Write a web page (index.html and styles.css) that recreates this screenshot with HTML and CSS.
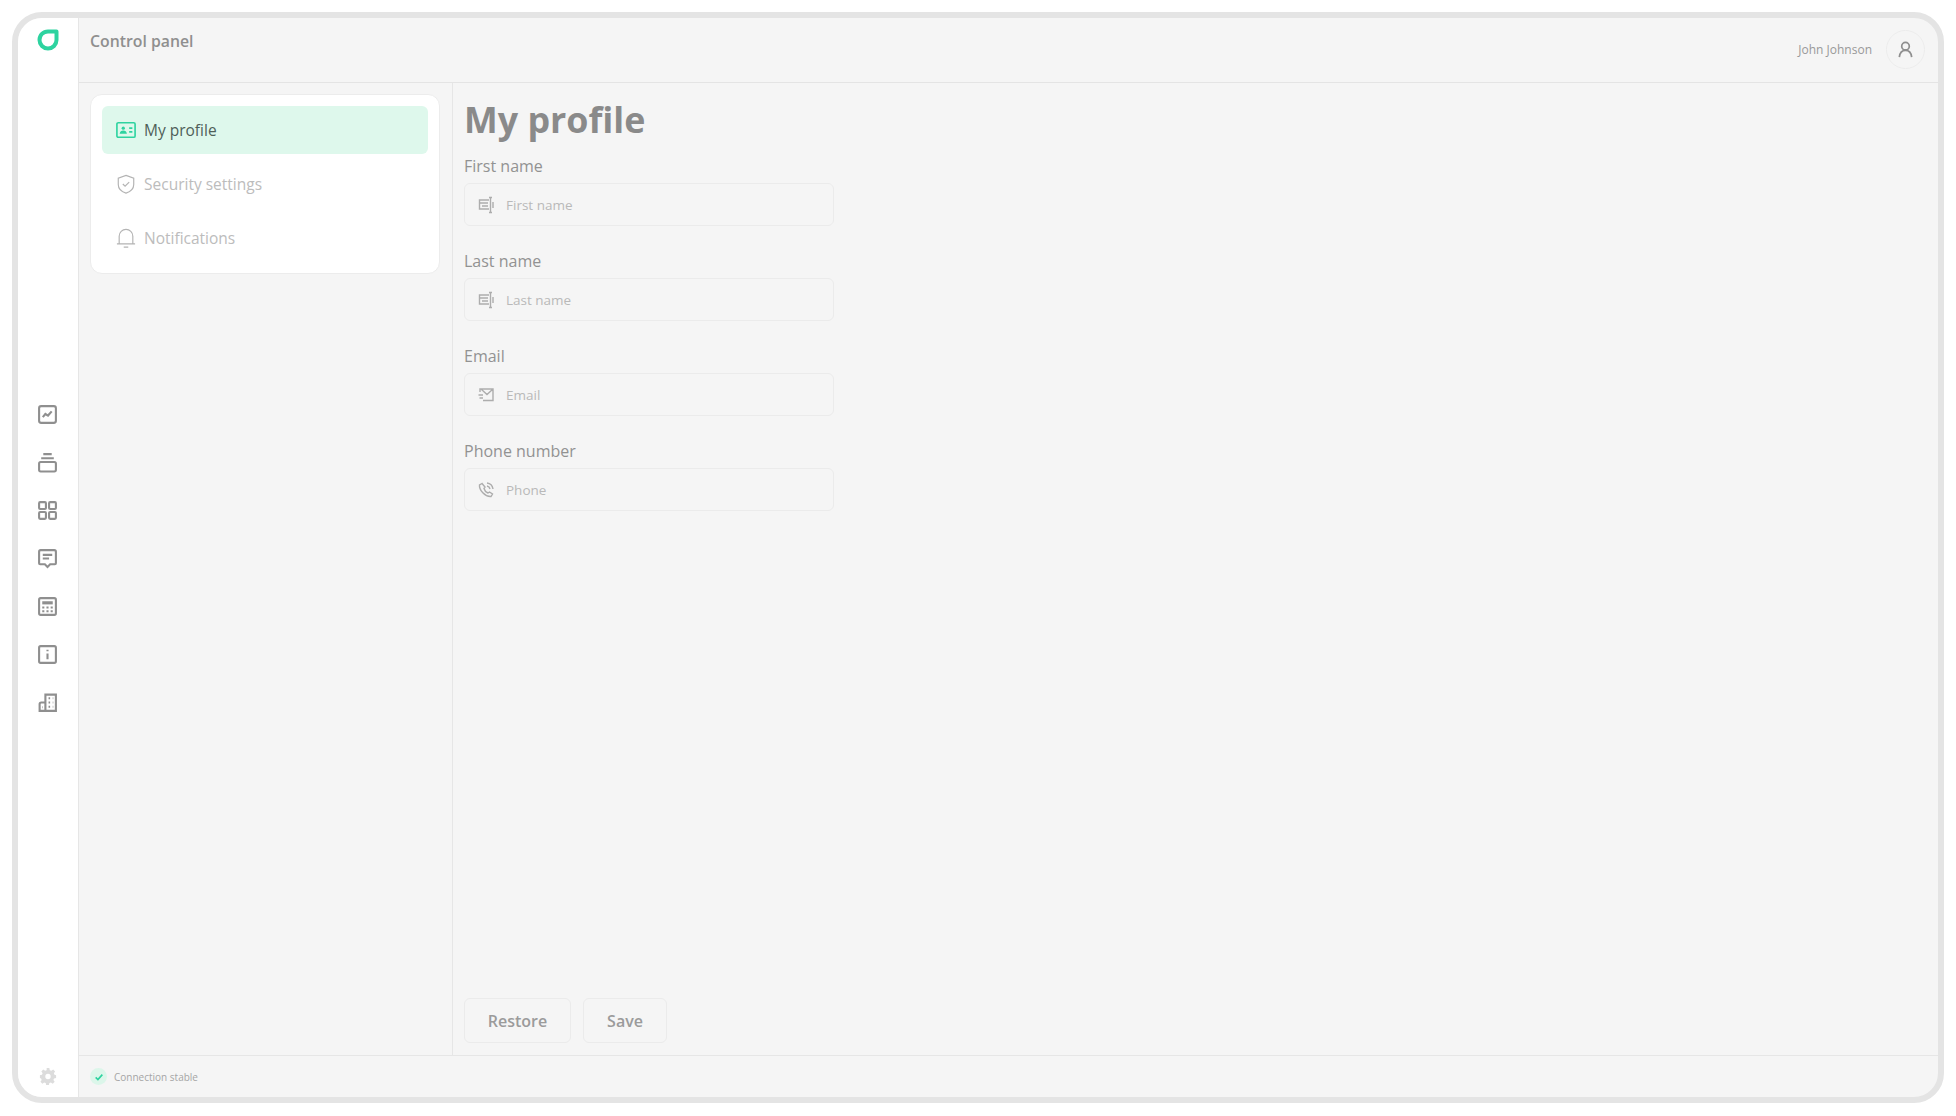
FILE: index.html
```html
<!DOCTYPE html>
<html>
  <head>
    <title>Control panel</title>
    <link rel="stylesheet" href="styles.css">
  </head>
  <body>
    <div class="frame">
      <aside class="rail">
        <svg class="logo" viewBox="0 0 22 22"><path d="M19.500 2.500v8.500a8.500 8.500 0 1 1-17 0c0-4.800 3.700-8.500 8.500-8.500z" fill="none" stroke="#2ed3a0" stroke-width="4" stroke-linejoin="round"/></svg>
        <nav class="rail-nav">
          <svg class="rail-icon" viewBox="0 0 20 20"><rect x="2" y="2" width="16" height="16" rx="2"/><path d="M5.500 12.500l2.500-3 2.500 1.500 3.500-4"/></svg>
          <svg class="rail-icon" viewBox="0 0 20 20"><path d="M6 2h8M4 6h12"/><rect x="2" y="9.500" width="16" height="9" rx="1.500"/></svg>
          <svg class="rail-icon" viewBox="0 0 20 20"><rect x="2" y="2" width="6.500" height="6.500" rx="1"/><rect x="11.500" y="2" width="6.500" height="6.500" rx="1"/><rect x="2" y="11.500" width="6.500" height="6.500" rx="1"/><rect x="11.500" y="11.500" width="6.500" height="6.500" rx="1"/></svg>
          <svg class="rail-icon" viewBox="0 0 20 20"><path d="M3.500 2h13A1.500 1.500 0 0 1 18 3.500v11a1 1 0 0 1-1 1h-4.500L10 18l-2.500-2.500H3a1 1 0 0 1-1-1v-11A1.500 1.500 0 0 1 3.500 2z"/><path d="M5.500 6.500h9M5.500 10h6"/></svg>
          <svg class="rail-icon" viewBox="0 0 20 20"><rect x="2" y="2" width="16" height="16" rx="1.500"/><path class="thick" d="M5 6.500h10"/><path d="M5 11h2M9 11h2M13 11h2M5 14.500h2M9 14.500h2M13 14.500h2"/></svg>
          <svg class="rail-icon" viewBox="0 0 20 20"><rect x="2" y="2" width="16" height="16" rx="1.500"/><path d="M10 9v5.500M10 5.500v1.500"/></svg>
          <svg class="rail-icon" viewBox="0 0 20 20"><path d="M8 10V2.500h10V18H2.500v-6.500A1.500 1.500 0 0 1 4 10zM8 10v8"/><path d="M11 6h1.500M15 6h.5M11 10h1.500M15 10h.5M11 14h1.500M15 14h.5M5 14.500h.5"/></svg>
        </nav>
        <svg class="gear" viewBox="0 0 20 20"><path d="M8.500 1h3l.5 2.500 1.700.7 2.100-1.400 2.100 2.100-1.400 2.100.7 1.700L19 9.200v3l-2.300.5-.7 1.700 1.400 2.100-2.100 2.100-2.100-1.400-1.700.7-.5 2.500h-3l-.5-2.500-1.700-.7-2.100 1.400-2.100-2.100 1.400-2.100-.7-1.700L1 12.200v-3l2.300-.5.700-1.700-1.400-2.100 2.100-2.100 2.100 1.400 1.700-.7zM10 7.500a3 3 0 1 0 0 6 3 3 0 0 0 0-6z" fill-rule="evenodd"/></svg>
      </aside>
      <div class="content">
        <header class="topbar">
          <div class="app-title">Control panel</div>
          <div class="user">
            <span class="user-name">John Johnson</span>
            <span class="avatar">
              <svg viewBox="0 0 20 20"><circle cx="10" cy="6.500" r="4"/><path d="M3.500 18c.5-4 2.500-7 6.500-7s6 3 6.500 7"/></svg>
            </span>
          </div>
        </header>
        <div class="body">
          <div class="side">
            <div class="card">
              <a class="item active">
                <svg viewBox="0 0 22 18"><rect x="1" y="1" width="20" height="16" rx="1.500"/><circle cx="8" cy="7" r="1.800" class="fill"/><path class="fill" d="M4 13c.4-2.500 1.800-3.500 4-3.500s3.600 1 4 3.500z"/><path d="M14.500 7H18M14.500 11H18"/></svg>
                My profile
              </a>
              <a class="item">
                <svg viewBox="0 0 22 22"><path d="M11 1.500l8.500 3v7c0 5-4 8-8.500 9.500-4.500-1.500-8.500-4.500-8.500-9.500v-7z"/><path d="M7.500 11l2.500 2.500 4.500-4.500"/></svg>
                Security settings
              </a>
              <a class="item">
                <svg viewBox="0 0 22 22"><path d="M1 17.500h20M3.500 17.500V9a7.500 7.500 0 0 1 15 0v8.500M8.500 21h5"/></svg>
                Notifications
              </a>
            </div>
          </div>
          <main class="main">
            <h1>My profile</h1>
            <div class="fields">
              <div class="field">
                <label>First name</label>
                <div class="input">
                  <svg viewBox="0 0 18 18"><path d="M12 4H2.500v9H12M2.500 7H11M5 10h6"/><path d="M12 1.500h3M12 16.500h3M13.500 1.500v15M16 6v6"/></svg>
                  First name
                </div>
              </div>
              <div class="field">
                <label>Last name</label>
                <div class="input">
                  <svg viewBox="0 0 18 18"><path d="M12 4H2.500v9H12M2.500 7H11M5 10h6"/><path d="M12 1.500h3M12 16.500h3M13.500 1.500v15M16 6v6"/></svg>
                  Last name
                </div>
              </div>
              <div class="field">
                <label>Email</label>
                <div class="input">
                  <svg viewBox="0 0 18 18"><path d="M3 6V3h13v11.500H6M4 3l6 5.500L16 3M1.500 9H6M2.500 12H6"/></svg>
                  Email
                </div>
              </div>
              <div class="field">
                <label>Phone number</label>
                <div class="input">
                  <svg viewBox="0 0 18 18"><path d="M5 2.500L2.500 4c-.5 5 5.500 12 11.500 11.500l1.500-2.500-3-2-1.500 1c-2-.8-3.500-2.500-4-4.500l1-1.500z"/><path d="M10 2c3 .3 5.500 2.800 6 6M10 5c1.500.3 2.700 1.500 3 3"/></svg>
                  Phone
                </div>
              </div>
            </div>
            <div class="actions">
              <button class="restore">Restore</button>
              <button class="save">Save</button>
            </div>
          </main>
        </div>
        <footer class="status">
          <span class="status-dot">
            <svg viewBox="0 0 12 12"><path d="M2 6.500l2.700 2.500L10 3.200"/></svg>
          </span>
          Connection stable
        </footer>
      </div>
    </div>
  </body>
</html>
```

FILE: styles.css
```css
* {
  box-sizing: border-box;
}
html, body {
  height: 100%;
}
body {
  margin: 0;
  padding: 12px 12px 13px 12px;
  background-color: #fff;
  font-family: "Open Sans", sans-serif;
  color: #8c8c8c;
}
svg {
  display: block;
  fill: none;
}
.frame {
  display: flex;
  height: 100%;
  border: 6px solid #e4e4e4;
  border-radius: 30px;
  overflow: hidden;
  background-color: #f5f5f5;
}
.rail {
  width: 61px;
  flex-shrink: 0;
  display: flex;
  flex-direction: column;
  justify-content: space-between;
  align-items: center;
  padding: 11px 0 12px 0;
  background-color: #fff;
  border-right: 1px solid #e6e6e6;
}
.logo {
  width: 22px;
  height: 22px;
  margin-left: -1px;
}
.rail-nav {
  display: flex;
  flex-direction: column;
  align-items: center;
  gap: 27px;
  margin: 0 0 2px -1px;
}
.rail-icon {
  width: 21px;
  height: 21px;
  stroke: #8f8f8f;
  stroke-width: 2;
}
.rail-icon .thick {
  stroke-width: 3;
}
.gear {
  width: 18px;
  height: 18px;
  fill: #dcdcdc;
  margin-left: -1px;
}
.content {
  flex: 1;
  display: flex;
  flex-direction: column;
  min-width: 0;
}
.topbar {
  height: 65px;
  flex-shrink: 0;
  display: flex;
  justify-content: space-between;
  padding: 0 13px 0 11px;
  border-bottom: 1px solid #e4e4e4;
}
.app-title {
  margin-top: 12px;
  font-size: 15.800px;
  line-height: 22px;
  font-weight: 600;
  color: #8f8f8f;
}
.user {
  display: flex;
  align-items: center;
  gap: 14px;
  margin-top: 12px;
  height: 39px;
}
.user-name {
  font-size: 12px;
  color: #999;
}
.avatar {
  width: 39px;
  height: 39px;
  display: flex;
  align-items: center;
  justify-content: center;
  border: 1px solid #ececec;
  border-radius: 50%;
}
.avatar svg {
  width: 19px;
  height: 19px;
  stroke: #8f8f8f;
  stroke-width: 1.800;
}
.body {
  flex: 1;
  display: flex;
  min-height: 0;
}
.side {
  width: 374px;
  flex-shrink: 0;
  padding: 11px 12px 0 11px;
  border-right: 1px solid #e6e6e6;
}
.card {
  height: 180px;
  padding: 11px;
  display: flex;
  flex-direction: column;
  gap: 6px;
  background-color: #fff;
  border: 1px solid #ececec;
  border-radius: 12px;
}
.item {
  height: 48px;
  display: flex;
  align-items: center;
  gap: 8px;
  padding: 0 14px;
  font-size: 15.500px;
  color: #bcbcbc;
  border-radius: 6px;
}
.item svg {
  width: 20px;
  height: 20px;
  stroke: #b4b4b4;
  stroke-width: 1.300;
}
.item.active {
  background-color: #def8ec;
  color: #4f5f59;
}
.item.active svg {
  stroke: #2ed3a0;
  stroke-width: 1.800;
}
.item.active svg .fill {
  fill: #2ed3a0;
  stroke: none;
}
.main {
  flex: 1;
  display: flex;
  flex-direction: column;
  padding: 14px 11px 12px 11px;
}
h1 {
  margin: 0 0 12px 0;
  font-size: 35.800px;
  line-height: 44px;
  font-weight: 700;
  color: #8a8a8a;
}
.fields {
  flex: 1;
  display: flex;
  flex-direction: column;
  gap: 22px;
}
.field {
  height: 73px;
}
.field label {
  display: block;
  height: 30px;
  padding-top: 2px;
  font-size: 16px;
  line-height: 22px;
  color: #929292;
}
.input {
  width: 370px;
  height: 43px;
  display: flex;
  align-items: center;
  gap: 11px;
  padding: 0 12px;
  font-size: 13.500px;
  color: #b9b9b9;
  border: 1px solid #ebebeb;
  border-radius: 6px;
}
.input svg {
  width: 18px;
  height: 18px;
  stroke: #adadad;
  stroke-width: 1.400;
}
.actions {
  display: flex;
  gap: 12px;
}
.actions button {
  height: 45px;
  padding: 0;
  font-family: inherit;
  font-size: 16px;
  font-weight: 600;
  color: #9b9b9b;
  background: none;
  border: 1px solid #ebebeb;
  border-radius: 6px;
}
.restore {
  width: 107px;
}
.save {
  width: 84px;
}
.status {
  height: 42px;
  flex-shrink: 0;
  display: flex;
  align-items: center;
  gap: 7px;
  padding: 0 11px;
  font-size: 10px;
  color: #a5a5a5;
  border-top: 1px solid #e6e6e6;
}
.status-dot {
  width: 17px;
  height: 17px;
  display: flex;
  align-items: center;
  justify-content: center;
  background-color: #dcf6ea;
  border-radius: 50%;
}
.status-dot svg {
  width: 10px;
  height: 10px;
  stroke: #2ed3a0;
  stroke-width: 2;
}
```
